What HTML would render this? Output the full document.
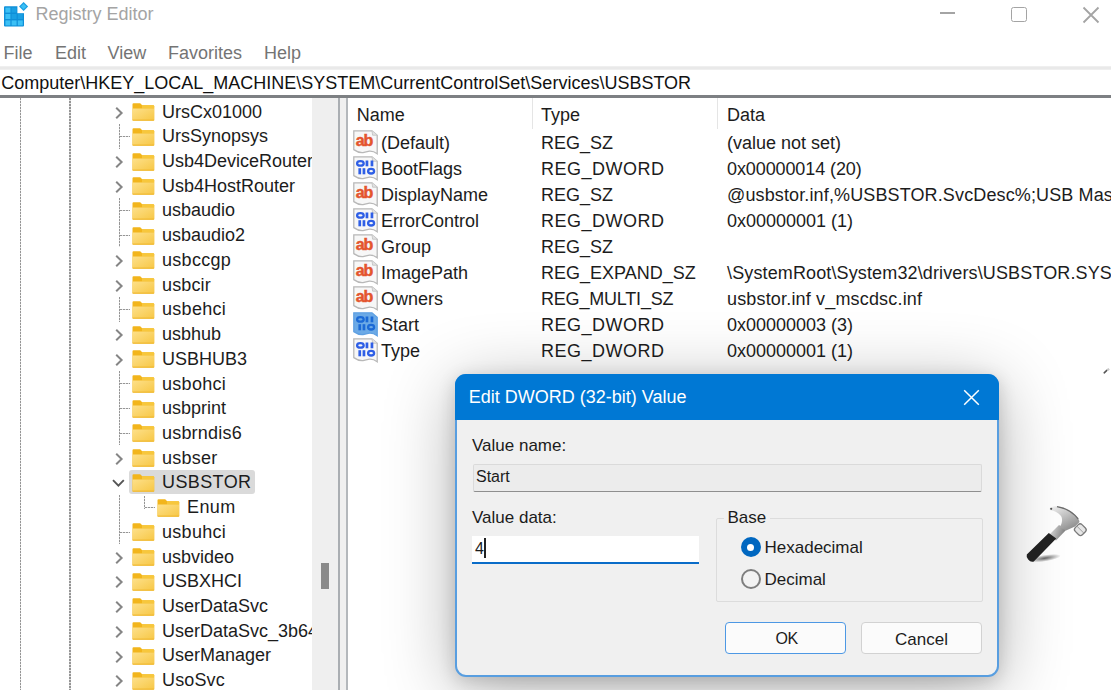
<!DOCTYPE html>
<html><head><meta charset="utf-8">
<style>
*{margin:0;padding:0;box-sizing:border-box}
html,body{width:1111px;height:690px;overflow:hidden;background:#fff}
body{position:relative;font-family:"Liberation Sans",sans-serif;color:#1c1c1c}
.a{position:absolute}
.t{position:absolute;font-size:18px;line-height:18px;white-space:nowrap}
.fo,.chev,.ic{position:absolute}
.vd{position:absolute;width:1.2px;background:repeating-linear-gradient(to bottom,#959595 0 1.8px,#e2e2e2 1.8px 3px)}
.hd{position:absolute;height:1.2px;background:repeating-linear-gradient(to right,#959595 0 1.8px,#e2e2e2 1.8px 3px)}
.sel{position:absolute;left:128.8px;width:126.5px;height:24.4px;background:#dadada;border-radius:3px}
#tree{position:absolute;left:0;top:98px;width:312px;height:592px;overflow:hidden}
#tree>.in{position:absolute;left:0;top:-98px;width:312px;height:690px}
#right{position:absolute;left:347px;top:98px;width:764px;height:592px;overflow:hidden}
#right>.in{position:absolute;left:-347px;top:-98px;width:1111px;height:690px}
.dlg{position:absolute;left:455.4px;top:373.5px;width:543.3px;height:303.6px;border-radius:11px;background:#f0f0f0;border:2px solid #589ee0;box-shadow:0 12px 70px rgba(0,0,0,0.30),0 4px 18px rgba(0,0,0,0.16)}
.dtitle{position:absolute;left:-2px;top:-2px;right:-2px;height:46px;background:#0078d4;border-radius:11px 11px 0 0}
.d17{position:absolute;font-size:17px;line-height:17px;white-space:nowrap;color:#1c1c1c}
</style></head><body>
<svg width="0" height="0" style="position:absolute">
<defs>
<linearGradient id="fg" x1="0" y1="0" x2="1" y2="1"><stop offset="0" stop-color="#fde08a"/><stop offset="1" stop-color="#f7c745"/></linearGradient>
<symbol id="fold" viewBox="0 0 23 18">
<path d="M0.5 1.2 Q0.5 0.2 1.5 0.2 L8.2 0.2 L10.2 2.2 L21.2 2.2 Q22.2 2.2 22.2 3.2 L22.2 16.5 Q22.2 17.6 21.2 17.6 L1.5 17.6 Q0.5 17.6 0.5 16.5 Z" fill="#f2b51c"/>
<path d="M10 2.2 L21.2 2.2 Q22.2 2.2 22.2 3.2 L22.2 5.5 L10 5.5 Z" fill="#f7c73c"/>
<path d="M0.5 5.5 L22.2 5.5 L22.2 16.5 Q22.2 17.6 21.2 17.6 L1.5 17.6 Q0.5 17.6 0.5 16.5 Z" fill="url(#fg)"/>
<rect x="0.5" y="16.6" width="21.7" height="1" fill="#efb62e"/>
</symbol>
<symbol id="doc" viewBox="0 0 25 25">
<path d="M0.8 0.8 L19 0.8 L24.2 5.2 L24.2 23.8 Q20.5 21 16.5 21.2 Q13 21.8 10 22.6 Q5.5 23 0.8 19.6 Z" fill="#f7f7f7" stroke="#b8b8b8" stroke-width="1.3"/>
<path d="M19 0.8 L19.6 5.2 L24.2 5.2" fill="#e2e2e2" stroke="#c4c4c4" stroke-width="0.9"/>
</symbol>
<symbol id="ab" viewBox="0 0 25 25">
<use href="#doc"/>
<text x="2.8" y="15.5" style="font-family:'Liberation Sans';font-weight:700;font-size:16px;letter-spacing:-1.2px" fill="#e4542e" stroke="#e4542e" stroke-width="0.5">ab</text>
</symbol>
<symbol id="binglyph" viewBox="0 0 25 25">
<ellipse cx="7.4" cy="7.4" rx="3.3" ry="2.3" fill="none" stroke="#2f5fe6" stroke-width="2.3"/>
<rect x="12.6" y="4.5" width="2.7" height="5.8"/><rect x="17.6" y="4.5" width="2.7" height="5.8"/>
<rect x="5.4" y="12.2" width="2.7" height="6.1"/><rect x="9.6" y="12.2" width="2.7" height="6.1"/>
<ellipse cx="18.1" cy="15.2" rx="3.0" ry="2.3" fill="none" stroke="#2f5fe6" stroke-width="2.3"/>
</symbol>
<symbol id="bin" viewBox="0 0 25 25">
<use href="#doc"/><g fill="#2f5fe6"><use href="#binglyph"/></g>
</symbol>
<symbol id="binsel" viewBox="0 0 25 25">
<path d="M0.8 0.8 L19 0.8 L24.2 5.2 L24.2 23.8 Q20.5 21 16.5 21.2 Q13 21.8 10 22.6 Q5.5 23 0.8 19.6 Z" fill="#6caae6" stroke="#5fa0e2" stroke-width="1.3"/>
<ellipse cx="7.4" cy="7.4" rx="3.3" ry="2.3" fill="none" stroke="#1c6ad6" stroke-width="2.3"/>
<g fill="#1c6ad6"><rect x="12.6" y="4.5" width="2.7" height="5.8"/><rect x="17.6" y="4.5" width="2.7" height="5.8"/>
<rect x="5.4" y="12.2" width="2.7" height="6.1"/><rect x="9.6" y="12.2" width="2.7" height="6.1"/></g>
<ellipse cx="18.1" cy="15.2" rx="3.0" ry="2.3" fill="none" stroke="#1c6ad6" stroke-width="2.3"/>
</symbol>
</defs></svg>

<!-- title bar -->
<svg class="a" style="left:3px;top:2px" width="26" height="26" viewBox="0 0 26 26">
<rect x="1" y="4.2" width="20" height="20.2" rx="1" fill="#0f8fd8"/>
<g fill="#3cc0f5">
<rect x="2.4" y="5.6" width="5" height="5"/><rect x="2.4" y="12" width="5" height="5"/><rect x="2.4" y="18.4" width="5" height="5"/>
<rect x="8.6" y="18.4" width="5" height="5"/><rect x="14.8" y="18.4" width="5" height="5"/>
</g>
<g fill="#1a9fe3"><rect x="8.6" y="5.6" width="5" height="5"/><rect x="8.6" y="12" width="5" height="5"/><rect x="14.8" y="12" width="5" height="5"/></g>
<rect x="14.4" y="3.6" width="7" height="7.6" fill="#fff"/>
<rect x="17.4" y="1.3" width="6.4" height="6.4" transform="rotate(45 20.6 4.5)" fill="#1a9fe3"/>
<rect x="18.6" y="2.5" width="4" height="4" transform="rotate(45 20.6 4.5)" fill="#3cc0f5"/>
</svg>
<div class="t" style="left:35.5px;top:5px;color:#a4a4a4">Registry Editor</div>
<div class="a" style="left:939.5px;top:12.4px;width:15.5px;height:1.8px;background:#a4a4a4"></div>
<div class="a" style="left:1011.2px;top:6.8px;width:15.5px;height:15.5px;border:1.8px solid #a4a4a4;border-radius:2.5px"></div>
<svg class="a" style="left:1082px;top:5.5px" width="18" height="18"><path d="M1.5 1.5 L16.5 16.5 M16.5 1.5 L1.5 16.5" stroke="#a4a4a4" stroke-width="1.8"/></svg>

<!-- menu -->
<div class="t" style="left:3.5px;top:43.5px;color:#747474">File</div>
<div class="t" style="left:55px;top:43.5px;color:#747474">Edit</div>
<div class="t" style="left:107.5px;top:43.5px;color:#747474">View</div>
<div class="t" style="left:168px;top:43.5px;color:#747474">Favorites</div>
<div class="t" style="left:264px;top:43.5px;color:#747474">Help</div>
<div class="a" style="left:0;top:66px;width:1111px;height:4px;background:linear-gradient(#f2f2f2,#e6e6e6 50%,#f2f2f2)"></div>

<!-- address -->
<div class="t" style="left:1.2px;top:73.9px;color:#111">Computer\HKEY_LOCAL_MACHINE\SYSTEM\CurrentControlSet\Services\USBSTOR</div>
<div class="a" style="left:0;top:95.3px;width:1111px;height:2.7px;background:#7d8083"></div>

<!-- tree -->
<div id="tree"><div class="in">
<div class="sel" style="top:470.00px"></div><div class="vd" style="left:20.2px;top:98px;height:592px"></div><div class="vd" style="left:69.4px;top:98px;height:592px"></div><svg class="chev" style="left:113px;top:105.70px" width="12" height="14"><path d="M3.2 1.8 L8.6 7 L3.2 12.2" fill="none" stroke="#858585" stroke-width="2"/></svg><svg class="fo" style="left:132.20px;top:103.10px" width="23" height="18"><use href="#fold"/></svg><div class="t" style="left:162px;top:102.60px;letter-spacing:0px">UrsCx01000</div><div class="vd" style="left:119px;top:124px;height:25px"></div><div class="hd" style="left:120px;top:136px;width:10px"></div><svg class="fo" style="left:132.20px;top:127.82px" width="23" height="18"><use href="#fold"/></svg><div class="t" style="left:162px;top:127.32px;letter-spacing:0px">UrsSynopsys</div><svg class="chev" style="left:113px;top:155.14px" width="12" height="14"><path d="M3.2 1.8 L8.6 7 L3.2 12.2" fill="none" stroke="#858585" stroke-width="2"/></svg><svg class="fo" style="left:132.20px;top:152.54px" width="23" height="18"><use href="#fold"/></svg><div class="t" style="left:162px;top:152.04px;letter-spacing:0px">Usb4DeviceRouter</div><svg class="chev" style="left:113px;top:179.86px" width="12" height="14"><path d="M3.2 1.8 L8.6 7 L3.2 12.2" fill="none" stroke="#858585" stroke-width="2"/></svg><svg class="fo" style="left:132.20px;top:177.26px" width="23" height="18"><use href="#fold"/></svg><div class="t" style="left:162px;top:176.76px;letter-spacing:0px">Usb4HostRouter</div><div class="vd" style="left:119px;top:198px;height:25px"></div><div class="hd" style="left:120px;top:210px;width:10px"></div><svg class="fo" style="left:132.20px;top:201.98px" width="23" height="18"><use href="#fold"/></svg><div class="t" style="left:162px;top:201.48px;letter-spacing:0px">usbaudio</div><div class="vd" style="left:119px;top:223px;height:24px"></div><div class="hd" style="left:120px;top:235px;width:10px"></div><svg class="fo" style="left:132.20px;top:226.70px" width="23" height="18"><use href="#fold"/></svg><div class="t" style="left:162px;top:226.20px;letter-spacing:0px">usbaudio2</div><svg class="chev" style="left:113px;top:254.02px" width="12" height="14"><path d="M3.2 1.8 L8.6 7 L3.2 12.2" fill="none" stroke="#858585" stroke-width="2"/></svg><svg class="fo" style="left:132.20px;top:251.42px" width="23" height="18"><use href="#fold"/></svg><div class="t" style="left:162px;top:250.92px;letter-spacing:0.3px">usbccgp</div><svg class="chev" style="left:113px;top:278.74px" width="12" height="14"><path d="M3.2 1.8 L8.6 7 L3.2 12.2" fill="none" stroke="#858585" stroke-width="2"/></svg><svg class="fo" style="left:132.20px;top:276.14px" width="23" height="18"><use href="#fold"/></svg><div class="t" style="left:162px;top:275.64px;letter-spacing:0.15px">usbcir</div><div class="vd" style="left:119px;top:297px;height:25px"></div><div class="hd" style="left:120px;top:309px;width:10px"></div><svg class="fo" style="left:132.20px;top:300.86px" width="23" height="18"><use href="#fold"/></svg><div class="t" style="left:162px;top:300.36px;letter-spacing:0.3px">usbehci</div><svg class="chev" style="left:113px;top:328.18px" width="12" height="14"><path d="M3.2 1.8 L8.6 7 L3.2 12.2" fill="none" stroke="#858585" stroke-width="2"/></svg><svg class="fo" style="left:132.20px;top:325.58px" width="23" height="18"><use href="#fold"/></svg><div class="t" style="left:162px;top:325.08px;letter-spacing:0px">usbhub</div><svg class="chev" style="left:113px;top:352.90px" width="12" height="14"><path d="M3.2 1.8 L8.6 7 L3.2 12.2" fill="none" stroke="#858585" stroke-width="2"/></svg><svg class="fo" style="left:132.20px;top:350.30px" width="23" height="18"><use href="#fold"/></svg><div class="t" style="left:162px;top:349.80px;letter-spacing:0px">USBHUB3</div><div class="vd" style="left:119px;top:371px;height:25px"></div><div class="hd" style="left:120px;top:383px;width:10px"></div><svg class="fo" style="left:132.20px;top:375.02px" width="23" height="18"><use href="#fold"/></svg><div class="t" style="left:162px;top:374.52px;letter-spacing:0.3px">usbohci</div><div class="vd" style="left:119px;top:396px;height:24px"></div><div class="hd" style="left:120px;top:408px;width:10px"></div><svg class="fo" style="left:132.20px;top:399.74px" width="23" height="18"><use href="#fold"/></svg><div class="t" style="left:162px;top:399.24px;letter-spacing:0px">usbprint</div><div class="vd" style="left:119px;top:420px;height:25px"></div><div class="hd" style="left:120px;top:433px;width:10px"></div><svg class="fo" style="left:132.20px;top:424.46px" width="23" height="18"><use href="#fold"/></svg><div class="t" style="left:162px;top:423.96px;letter-spacing:0.2px">usbrndis6</div><svg class="chev" style="left:113px;top:451.78px" width="12" height="14"><path d="M3.2 1.8 L8.6 7 L3.2 12.2" fill="none" stroke="#858585" stroke-width="2"/></svg><svg class="fo" style="left:132.20px;top:449.18px" width="23" height="18"><use href="#fold"/></svg><div class="t" style="left:162px;top:448.68px;letter-spacing:0.25px">usbser</div><svg class="chev" style="left:111px;top:476.90px" width="15" height="12"><path d="M2 3.2 L7.4 8.6 L12.8 3.2" fill="none" stroke="#555" stroke-width="1.9"/></svg><svg class="fo" style="left:132.20px;top:473.90px" width="23" height="18"><use href="#fold"/></svg><div class="t" style="left:162px;top:473.40px;letter-spacing:0.4px">USBSTOR</div><div class="vd" style="left:119px;top:495px;height:24px"></div><div class="vd" style="left:143.5px;top:496px;height:13px"></div><div class="hd" style="left:144.5px;top:507px;width:10.5px"></div><svg class="fo" style="left:156.80px;top:498.62px" width="23" height="18"><use href="#fold"/></svg><div class="t" style="left:187px;top:498.12px;letter-spacing:0.4px">Enum</div><div class="vd" style="left:119px;top:519px;height:25px"></div><div class="hd" style="left:120px;top:532px;width:10px"></div><svg class="fo" style="left:132.20px;top:523.34px" width="23" height="18"><use href="#fold"/></svg><div class="t" style="left:162px;top:522.84px;letter-spacing:0.3px">usbuhci</div><svg class="chev" style="left:113px;top:550.66px" width="12" height="14"><path d="M3.2 1.8 L8.6 7 L3.2 12.2" fill="none" stroke="#858585" stroke-width="2"/></svg><svg class="fo" style="left:132.20px;top:548.06px" width="23" height="18"><use href="#fold"/></svg><div class="t" style="left:162px;top:547.56px;letter-spacing:0px">usbvideo</div><svg class="chev" style="left:113px;top:575.38px" width="12" height="14"><path d="M3.2 1.8 L8.6 7 L3.2 12.2" fill="none" stroke="#858585" stroke-width="2"/></svg><svg class="fo" style="left:132.20px;top:572.78px" width="23" height="18"><use href="#fold"/></svg><div class="t" style="left:162px;top:572.28px;letter-spacing:0px">USBXHCI</div><svg class="chev" style="left:113px;top:600.10px" width="12" height="14"><path d="M3.2 1.8 L8.6 7 L3.2 12.2" fill="none" stroke="#858585" stroke-width="2"/></svg><svg class="fo" style="left:132.20px;top:597.50px" width="23" height="18"><use href="#fold"/></svg><div class="t" style="left:162px;top:597.00px;letter-spacing:0px">UserDataSvc</div><svg class="chev" style="left:113px;top:624.82px" width="12" height="14"><path d="M3.2 1.8 L8.6 7 L3.2 12.2" fill="none" stroke="#858585" stroke-width="2"/></svg><svg class="fo" style="left:132.20px;top:622.22px" width="23" height="18"><use href="#fold"/></svg><div class="t" style="left:162px;top:621.72px;letter-spacing:0px">UserDataSvc_3b64</div><svg class="chev" style="left:113px;top:649.54px" width="12" height="14"><path d="M3.2 1.8 L8.6 7 L3.2 12.2" fill="none" stroke="#858585" stroke-width="2"/></svg><svg class="fo" style="left:132.20px;top:646.94px" width="23" height="18"><use href="#fold"/></svg><div class="t" style="left:162px;top:646.44px;letter-spacing:0px">UserManager</div><svg class="chev" style="left:113px;top:674.26px" width="12" height="14"><path d="M3.2 1.8 L8.6 7 L3.2 12.2" fill="none" stroke="#858585" stroke-width="2"/></svg><svg class="fo" style="left:132.20px;top:671.66px" width="23" height="18"><use href="#fold"/></svg><div class="t" style="left:162px;top:671.16px;letter-spacing:0.15px">UsoSvc</div>
</div></div>
<div class="a" style="left:312.3px;top:98px;width:26px;height:592px;background:#efefef"></div>
<div class="a" style="left:320.9px;top:562.8px;width:7.7px;height:25.9px;background:#8a8a8a"></div>
<div class="a" style="left:338.2px;top:98px;width:2.2px;height:592px;background:#aaaeb2"></div>
<div class="a" style="left:340.4px;top:98px;width:5.4px;height:592px;background:#f0f0f0"></div>
<div class="a" style="left:345.8px;top:98px;width:2px;height:592px;background:#b4b8bc"></div>

<!-- right -->
<div id="right"><div class="in">
<div class="t" style="left:356.8px;top:105.8px">Name</div>
<div class="a" style="left:532.3px;top:98px;width:1px;height:31px;background:#e5e5e5"></div>
<div class="t" style="left:541px;top:105.8px">Type</div>
<div class="a" style="left:717px;top:98px;width:1px;height:31px;background:#e5e5e5"></div>
<div class="t" style="left:727px;top:105.8px">Data</div>
<svg class="ic" style="left:353px;top:129.60px" width="25" height="25"><use href="#ab"/></svg><div class="t" style="left:381px;top:134.20px">(Default)</div><div class="t" style="left:541px;top:134.20px;letter-spacing:0px">REG_SZ</div><div class="t" style="left:727px;top:134.20px;letter-spacing:0px">(value not set)</div><svg class="ic" style="left:353px;top:155.60px" width="25" height="25"><use href="#bin"/></svg><div class="t" style="left:381px;top:160.20px">BootFlags</div><div class="t" style="left:541px;top:160.20px;letter-spacing:0.5px">REG_DWORD</div><div class="t" style="left:727px;top:160.20px;letter-spacing:-0.1px">0x00000014 (20)</div><svg class="ic" style="left:353px;top:181.60px" width="25" height="25"><use href="#ab"/></svg><div class="t" style="left:381px;top:186.20px">DisplayName</div><div class="t" style="left:541px;top:186.20px;letter-spacing:0px">REG_SZ</div><div class="t" style="left:727px;top:186.20px;letter-spacing:0.13px">@usbstor.inf,%USBSTOR.SvcDesc%;USB Mass Storage Driver</div><svg class="ic" style="left:353px;top:207.60px" width="25" height="25"><use href="#bin"/></svg><div class="t" style="left:381px;top:212.20px">ErrorControl</div><div class="t" style="left:541px;top:212.20px;letter-spacing:0.5px">REG_DWORD</div><div class="t" style="left:727px;top:212.20px;letter-spacing:0px">0x00000001 (1)</div><svg class="ic" style="left:353px;top:233.60px" width="25" height="25"><use href="#ab"/></svg><div class="t" style="left:381px;top:238.20px">Group</div><div class="t" style="left:541px;top:238.20px;letter-spacing:0px">REG_SZ</div><div class="t" style="left:727px;top:238.20px;letter-spacing:0px"></div><svg class="ic" style="left:353px;top:259.60px" width="25" height="25"><use href="#ab"/></svg><div class="t" style="left:381px;top:264.20px">ImagePath</div><div class="t" style="left:541px;top:264.20px;letter-spacing:0px">REG_EXPAND_SZ</div><div class="t" style="left:727px;top:264.20px;letter-spacing:0.13px">\SystemRoot\System32\drivers\USBSTOR.SYS</div><svg class="ic" style="left:353px;top:285.60px" width="25" height="25"><use href="#ab"/></svg><div class="t" style="left:381px;top:290.20px">Owners</div><div class="t" style="left:541px;top:290.20px;letter-spacing:-0.2px">REG_MULTI_SZ</div><div class="t" style="left:727px;top:290.20px;letter-spacing:0.17px">usbstor.inf v_mscdsc.inf</div><svg class="ic" style="left:353px;top:311.60px" width="25" height="25"><use href="#binsel"/></svg><div class="t" style="left:381px;top:316.20px">Start</div><div class="t" style="left:541px;top:316.20px;letter-spacing:0.5px">REG_DWORD</div><div class="t" style="left:727px;top:316.20px;letter-spacing:0px">0x00000003 (3)</div><svg class="ic" style="left:353px;top:337.60px" width="25" height="25"><use href="#bin"/></svg><div class="t" style="left:381px;top:342.20px">Type</div><div class="t" style="left:541px;top:342.20px;letter-spacing:0.5px">REG_DWORD</div><div class="t" style="left:727px;top:342.20px;letter-spacing:0px">0x00000001 (1)</div>
</div></div>

<svg class="a" style="left:1102px;top:366px" width="9" height="9"><line x1="2.2" y1="6.8" x2="4.8" y2="4.4" stroke="#555" stroke-width="1.6" stroke-linecap="round"/><path d="M4.5 3.2 L6.5 2 L7.8 3.8 L6 5 Z" fill="#c8c8c8"/></svg>
<!-- hammer -->
<svg class="a" style="left:1020px;top:500px" width="72" height="70" viewBox="0 0 72 70">
<defs>
<linearGradient id="hm" x1="0" y1="0" x2="0.7" y2="1"><stop offset="0" stop-color="#f6f6f6"/><stop offset="0.5" stop-color="#c2c2c2"/><stop offset="1" stop-color="#8c8c8c"/></linearGradient>
<linearGradient id="nk" x1="0" y1="0" x2="1" y2="0.3"><stop offset="0" stop-color="#f0f0f0"/><stop offset="1" stop-color="#7c7c7c"/></linearGradient>
<radialGradient id="sh"><stop offset="0" stop-color="#000" stop-opacity="0.6"/><stop offset="1" stop-color="#000" stop-opacity="0"/></radialGradient>
</defs>
<ellipse cx="25" cy="58.2" rx="16" ry="3.4" transform="rotate(-9 25 58.2)" fill="url(#sh)"/>
<path d="M28.5 35.5 L39 25 L46.5 29.5 L36 40.5 Z" fill="url(#nk)"/>
<path d="M30 8 C33 5.5 40 6 46 8.6 C52 11.5 56 15 59 20 L59.5 22 L55 26.5 L46 30.5 L39.5 27.5 C42 24 43 19 41 16 C38.5 12.5 34 10.5 30.5 10.2 Q29 9.5 30 8 Z" fill="url(#hm)"/>
<path d="M37 6.6 C46 8.2 53 12 58.2 19" fill="none" stroke="#6c6c6c" stroke-width="1.3"/>
<circle cx="31.2" cy="8.8" r="1.1" fill="#555"/>
<g transform="rotate(45 60.5 29.5)"><rect x="55.5" y="25" width="10" height="9.5" rx="2.6" fill="#e6e6e6" stroke="#7a7a7a" stroke-width="1.3"/><line x1="55.5" y1="29.7" x2="65.5" y2="29.7" stroke="#9a9a9a" stroke-width="0.9"/></g>
<path d="M6.8 54.5 L28.8 33 L36.2 38.6 L13.8 61.6 Q10.5 62.5 8.2 59.5 Q6 56.8 6.8 54.5 Z" fill="#232323"/>
</svg>
<!-- dialog -->
<div class="dlg">
<div class="dtitle"></div>
</div>
<div class="t" style="left:468.7px;top:388.3px;color:#fff">Edit DWORD (32-bit) Value</div>
<svg class="a" style="left:963px;top:389px" width="17" height="17"><path d="M1.2 1.2 L15.8 15.8 M15.8 1.2 L1.2 15.8" stroke="#fff" stroke-width="1.5"/></svg>
<div class="d17" style="left:472px;top:436.7px">Value name:</div>
<div class="a" style="left:472.9px;top:464px;width:509.5px;height:28px;background:#ececec;border:1px solid #dadada;border-bottom:1.5px solid #8f8f8f;border-radius:2px"></div>
<div class="a" style="left:476px;top:469px;font-size:16px;line-height:16px;color:#1c1c1c">Start</div>
<div class="d17" style="left:472px;top:508.6px">Value data:</div>
<div class="a" style="left:472.2px;top:535.9px;width:226.5px;height:28.3px;background:#fff;border-bottom:2.5px solid #0a6cc8"></div>
<div class="a" style="left:475px;top:541px;font-size:16px;line-height:16px;color:#1c1c1c">4</div>
<div class="a" style="left:484.3px;top:537.8px;width:1.3px;height:20px;background:#222"></div>
<div class="a" style="left:716.3px;top:517.6px;width:266.4px;height:84px;border:1px solid #dcdcdc;border-radius:2px"></div>
<div class="a" style="left:724px;top:508px;width:46px;height:18px;background:#f0f0f0"></div>
<div class="d17" style="left:727.5px;top:508.8px">Base</div>
<div class="a" style="left:740.6px;top:537.2px;width:20.2px;height:20.2px;border-radius:50%;background:#0067c0"></div>
<div class="a" style="left:747.1px;top:543.6px;width:7px;height:7px;border-radius:50%;background:#fff"></div>
<div class="d17" style="left:764.5px;top:539px">Hexadecimal</div>
<div class="a" style="left:740.6px;top:569px;width:20.2px;height:20.2px;border-radius:50%;border:2px solid #7e7e7e;background:#f2f2f2"></div>
<div class="d17" style="left:764.5px;top:570.8px">Decimal</div>
<div class="a" style="left:724.6px;top:622.2px;width:121.4px;height:32px;border:1.8px solid #4d98e4;border-radius:4px;background:#fbfbfb"></div>
<div class="d17" style="left:775.5px;top:631.2px;font-size:16px;line-height:16px;letter-spacing:-0.4px">OK</div>
<div class="a" style="left:861.2px;top:622.2px;width:120.5px;height:32px;border:1px solid #d2d2d2;border-radius:4px;background:#fbfbfb"></div>
<div class="d17" style="left:895px;top:630.5px">Cancel</div>
</body></html>
